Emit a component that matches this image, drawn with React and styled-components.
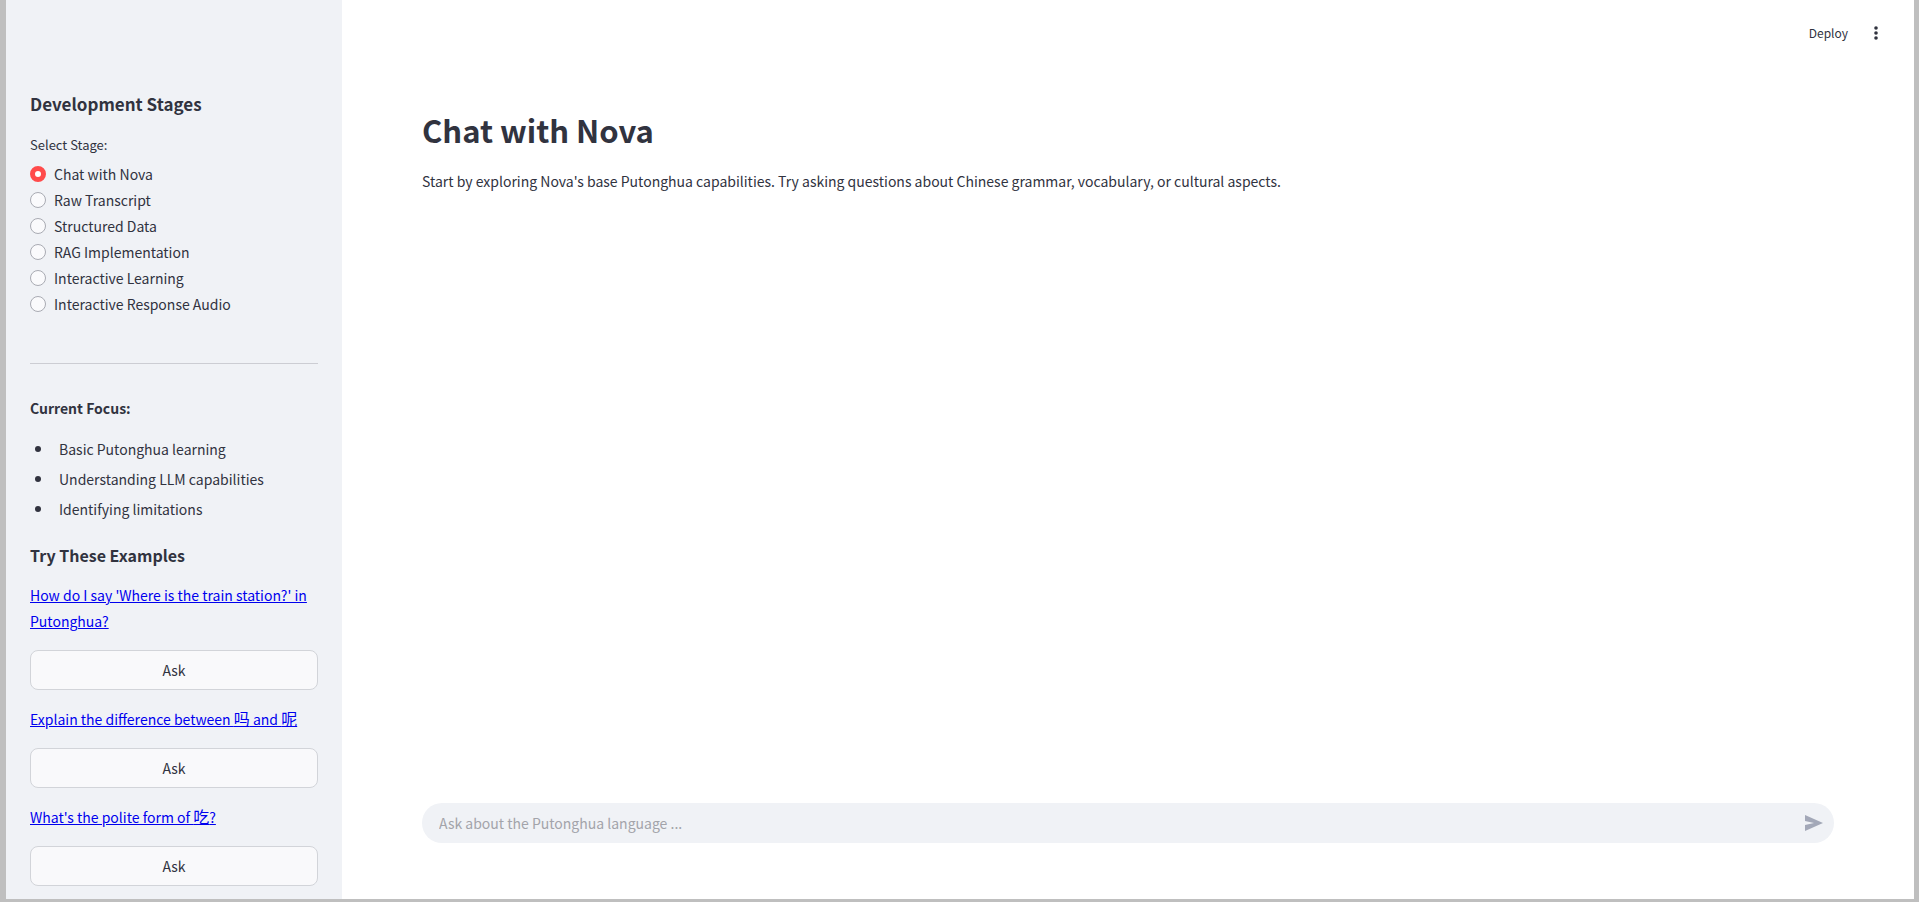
import React, { useState } from "react";
import styled, { createGlobalStyle } from "styled-components";

const Global = createGlobalStyle`
  *, *::before, *::after { box-sizing: border-box; }
  body {
    margin: 0;
    color: #31333f;
    background: #bfbfbf;
    font-family: "Noto Sans CJK SC", sans-serif;
    font-size: 14px;
    line-height: 26px;
  }
  button, input { font: inherit; color: inherit; }
`;

const Frame = styled.div`
  display: flex;
  min-height: 100vh;
  padding: 0 5px 3px 6px;
`;

const Sidebar = styled.aside`
  flex: 0 0 336px;
  padding: 88px 24px 12px;
  background: #f0f2f6;
`;

const Main = styled.main`
  flex: 1;
  min-width: 0;
  display: flex;
  flex-direction: column;
  background: #fff;
`;

const StagesTitle = styled.h2`
  margin: 0 0 12px;
  font-size: 17px;
  font-weight: 600;
  line-height: 32px;
`;

const StageGroup = styled.fieldset`
  margin: 0;
  padding: 0;
  border: 0;
`;

const StageLegend = styled.legend`
  padding: 0 0 3px;
  font-size: 13px;
`;

const StageOption = styled.label`
  display: flex;
  align-items: center;
  gap: 8px;
`;

const Radio = styled.input`
  appearance: none;
  flex: none;
  width: 16px;
  height: 16px;
  margin: 0;
  border: 1px solid #a9abb3;
  border-radius: 50%;
  background: #fafafc;
  &:checked {
    border: 5px solid #ff4b4b;
    background: #fff;
  }
`;

const Divider = styled.hr`
  height: 1px;
  margin: 46px 0 31px;
  border: 0;
  background: #cccdd3;
`;

const FocusTitle = styled.p`
  margin: 0 0 13px;
  font-weight: 600;
`;

const FocusList = styled.ul`
  margin: 0 0 16px;
  padding: 0 0 0 5px;
  line-height: 30px;
  list-style: none;
`;

const FocusItem = styled.li`
  display: flex;
  align-items: center;
  gap: 18px;
  &::before {
    content: "";
    width: 6px;
    height: 6px;
    border-radius: 50%;
    background: currentColor;
  }
`;

const ExamplesTitle = styled.h3`
  margin: 0 0 12px;
  font-size: 16px;
  font-weight: 600;
  line-height: 30px;
`;

const Example = styled.div`
  display: flex;
  flex-direction: column;
  gap: 16px;
  margin-bottom: 16px;
  &:last-child { margin-bottom: 0; }
`;

const ExampleLink = styled.a`
  color: #0000ee;
  text-decoration: underline;
`;

const Hanzi = styled.span`
  font-size: 16px;
  line-height: 1;
`;

const AskButton = styled.button`
  height: 40px;
  border: 1px solid #d2d4d9;
  border-radius: 8px;
  background: #f9f9fb;
`;

const Toolbar = styled.header`
  display: flex;
  justify-content: flex-end;
  align-items: center;
  gap: 16px;
  height: 66px;
  padding-right: 26px;
`;

const ToolbarButton = styled.button`
  display: flex;
  align-items: center;
  padding: 0;
  border: 0;
  background: none;
  font-size: 12px;
`;

const Content = styled.section`
  flex: 1;
  padding: 36px 80px 0;
`;

const PageTitle = styled.h1`
  margin: 0 0 10px;
  font-size: 31px;
  font-weight: 600;
  line-height: 56px;
`;

const Intro = styled.p`
  margin: 0;
`;

const ChatForm = styled.form`
  display: flex;
  align-items: center;
  height: 40px;
  margin: 0 80px 56px;
  padding: 0 10px 0 17px;
  border-radius: 20px;
  background: #f0f2f6;
`;

const ChatInput = styled.input`
  flex: 1;
  min-width: 0;
  padding: 0;
  border: 0;
  outline: 0;
  background: none;
  &::placeholder { color: #a3a4aa; opacity: 1; }
`;

const SendButton = styled.button`
  display: flex;
  padding: 0;
  border: 0;
  background: none;
  color: #a3a8b8;
`;

const stages = [
  "Chat with Nova",
  "Raw Transcript",
  "Structured Data",
  "RAG Implementation",
  "Interactive Learning",
  "Interactive Response Audio",
];

const focus = ["Basic Putonghua learning", "Understanding LLM capabilities", "Identifying limitations"];

const examples = [
  <>How do I say 'Where is the train station?' in Putonghua?</>,
  <>Explain the difference between <Hanzi>吗</Hanzi> and <Hanzi>呢</Hanzi></>,
  <>What's the polite form of <Hanzi>吃</Hanzi>?</>,
];

export default function App() {
  const [stage, setStage] = useState(stages[0]);
  return (
    <Frame>
      <Global />
      <Sidebar>
        <StagesTitle>Development Stages</StagesTitle>
        <StageGroup>
          <StageLegend>Select Stage:</StageLegend>
          {stages.map((name) => (
            <StageOption key={name}>
              <Radio type="radio" name="stage" checked={stage === name} onChange={() => setStage(name)} />
              {name}
            </StageOption>
          ))}
        </StageGroup>
        <Divider />
        <FocusTitle>Current Focus:</FocusTitle>
        <FocusList>
          {focus.map((item) => <FocusItem key={item}>{item}</FocusItem>)}
        </FocusList>
        <ExamplesTitle>Try These Examples</ExamplesTitle>
        {examples.map((text, i) => (
          <Example key={i}>
            <ExampleLink href="#">{text}</ExampleLink>
            <AskButton type="button">Ask</AskButton>
          </Example>
        ))}
      </Sidebar>
      <Main>
        <Toolbar>
          <ToolbarButton type="button">Deploy</ToolbarButton>
          <ToolbarButton type="button" aria-label="Main menu">
            <svg width="24" height="24" viewBox="0 0 24 24" fill="currentColor">
              <circle cx="12" cy="7" r="1.8" />
              <circle cx="12" cy="12" r="1.8" />
              <circle cx="12" cy="17" r="1.8" />
            </svg>
          </ToolbarButton>
        </Toolbar>
        <Content>
          <PageTitle>Chat with Nova</PageTitle>
          <Intro>
            Start by exploring Nova's base Putonghua capabilities. Try asking questions about Chinese
            grammar, vocabulary, or cultural aspects.
          </Intro>
        </Content>
        <ChatForm onSubmit={(e) => e.preventDefault()}>
          <ChatInput type="text" aria-label="Message" placeholder="Ask about the Putonghua language ..." />
          <SendButton type="submit" aria-label="Send message">
            <svg width="20" height="20" viewBox="0 0 20 20" fill="currentColor">
              <path d="M1 2 19 10 1 18V12L10 10 1 8Z" />
            </svg>
          </SendButton>
        </ChatForm>
      </Main>
    </Frame>
  );
}
